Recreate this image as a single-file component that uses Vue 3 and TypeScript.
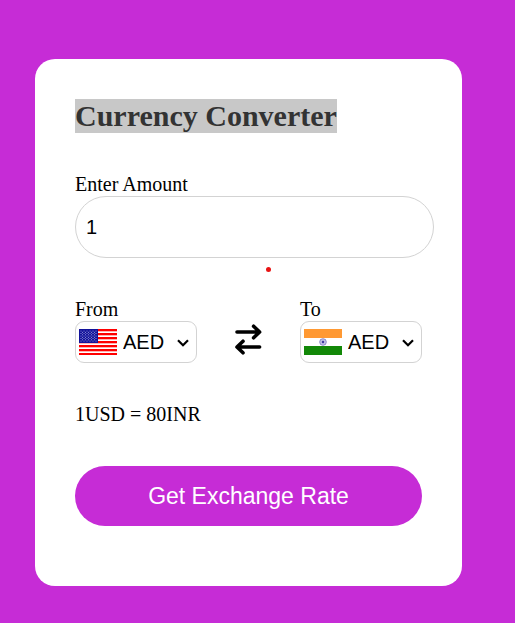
<script setup lang="ts">
import { ref } from 'vue'

const amount = ref('1')
const from = ref('AED')
const to = ref('AED')
const result = ref('1USD = 80INR')
const currencies: string[] = ['AED', 'USD', 'INR', 'EUR', 'GBP']

const stars: { x: number; y: number }[] = []
for (let row = 0; row < 5; row++) {
  for (let col = 0; col < 6; col++) {
    stars.push({ x: 2 + col * 3, y: 2 + row * 2.5 })
    if (row < 4 && col < 5) stars.push({ x: 3.5 + col * 3, y: 3.25 + row * 2.5 })
  }
}

const spokes: number[] = Array.from({ length: 12 }, (_, i) => i * 15)

function swap(): void {
  const previous = from.value
  from.value = to.value
  to.value = previous
}
</script>

<template>
  <main class="page">
    <form class="card" @submit.prevent>
      <h1 class="title"><span class="mark">Currency Converter</span></h1>

      <div class="amount">
        <label for="amount">Enter Amount</label>
        <input id="amount" v-model="amount" type="text" inputmode="decimal" />
        <span class="dot"></span>
      </div>

      <div class="pair">
        <div class="side">
          <label for="from">From</label>
          <div class="picker">
            <svg class="flag" viewBox="0 0 38 26" aria-hidden="true">
              <rect width="38" height="26" fill="#fff" />
              <rect v-for="n in 7" :key="n" x="0" :y="(n - 1) * 4" width="38" height="2.3" fill="#f00" />
              <rect width="19" height="14" fill="#12129a" />
              <circle v-for="(s, i) in stars" :key="i" :cx="s.x" :cy="s.y" r="0.5" fill="#b4b4e6" />
            </svg>
            <select id="from" v-model="from">
              <option v-for="c in currencies" :key="c">{{ c }}</option>
            </select>
            <svg class="chevron" viewBox="0 0 12 8" aria-hidden="true">
              <path d="M1 1.2 L6 6.2 L11 1.2" fill="none" stroke="#000" stroke-width="2.2" />
            </svg>
          </div>
        </div>

        <button class="swap" type="button" aria-label="Swap currencies" @click="swap">
          <svg viewBox="0 0 28 32" aria-hidden="true">
            <g fill="none" stroke="#000" stroke-width="3.6" stroke-linecap="round" stroke-linejoin="round">
              <path d="M2 9 H24.5 M18.6 3.2 L24.6 9 L18.6 14.8" />
              <path d="M24.6 24 H2.2 M8 18.2 L2 24 L8 29.8" />
            </g>
          </svg>
        </button>

        <div class="side">
          <label for="to">To</label>
          <div class="picker">
            <svg class="flag" viewBox="0 0 38 26" aria-hidden="true">
              <rect width="38" height="26" fill="#fff" />
              <rect width="38" height="9" fill="#f93" />
              <rect y="17" width="38" height="9" fill="#128807" />
              <circle cx="19" cy="13" r="3.3" fill="#e4e4f4" stroke="#5a5ab4" stroke-width="0.7" />
              <path
                v-for="a in spokes"
                :key="a"
                d="M19 10 V16"
                :transform="`rotate(${a} 19 13)`"
                stroke="#8080c8"
                stroke-width="0.2"
              />
              <circle cx="19" cy="13" r="1.2" fill="#3c3ca0" />
            </svg>
            <select id="to" v-model="to">
              <option v-for="c in currencies" :key="c">{{ c }}</option>
            </select>
            <svg class="chevron" viewBox="0 0 12 8" aria-hidden="true">
              <path d="M1 1.2 L6 6.2 L11 1.2" fill="none" stroke="#000" stroke-width="2.2" />
            </svg>
          </div>
        </div>
      </div>

      <p class="result">{{ result }}</p>

      <button class="submit" type="submit">Get Exchange Rate</button>
    </form>
  </main>
</template>

<style>
body {
  background: #c62cd6;
}
</style>

<style scoped>
.page {
  padding: 59px 53px 37px 35px;
  font-family: "Liberation Serif", "Times New Roman", serif;
  font-size: 20px;
  line-height: 23px;
  color: #000;
}

.card {
  display: flex;
  flex-direction: column;
  gap: 40px;
  padding: 40px 40px 60px;
  border-radius: 20px;
  background: #fff;
}

.title {
  margin: 0;
  font-size: 30px;
  line-height: 34px;
  font-weight: bold;
  color: #333;
}

.mark {
  display: inline-block;
  background: #c8c8c8;
}

.amount {
  position: relative;
}

label {
  display: block;
}

.amount input {
  display: block;
  box-sizing: border-box;
  width: calc(100% + 12px);
  height: 62px;
  margin: 0;
  padding: 0 10px;
  border: 1px solid #d3d3d3;
  border-radius: 31px;
  background: #fff;
  color: #000;
  font-family: "Liberation Sans", Arial, sans-serif;
  font-size: 20px;
  outline: none;
}

.dot {
  position: absolute;
  left: 191px;
  bottom: -14px;
  width: 5px;
  height: 5px;
  border-radius: 50%;
  background: #e81313;
}

.pair {
  display: flex;
  justify-content: space-between;
  align-items: flex-end;
}

.picker {
  position: relative;
  display: flex;
  align-items: center;
  gap: 6px;
  box-sizing: border-box;
  width: 122px;
  height: 42px;
  padding: 0 3px;
  border: 1px solid #d3d3d3;
  border-radius: 9px;
}

.flag {
  flex: none;
  width: 38px;
  height: 26px;
}

select {
  appearance: none;
  flex: 1;
  min-width: 0;
  height: 40px;
  margin: 0;
  padding: 0;
  border: 0;
  background: transparent;
  color: #000;
  font-family: "Liberation Sans", Arial, sans-serif;
  font-size: 20px;
  outline: none;
}

.chevron {
  position: absolute;
  right: 7px;
  top: 17px;
  width: 12px;
  height: 8px;
  pointer-events: none;
}

.swap {
  height: 42px;
  margin: 0;
  padding: 0;
  border: 0;
  background: none;
  cursor: pointer;
}

.swap svg {
  display: block;
  width: 28px;
  height: 32px;
  margin-bottom: 6px;
}

.result {
  margin: 0;
}

.submit {
  height: 60px;
  margin: 0;
  padding: 0;
  border: 0;
  border-radius: 30px;
  background: #c62cd6;
  color: #fff;
  font-family: "Liberation Sans", Arial, sans-serif;
  font-size: 23px;
  cursor: pointer;
}
</style>
